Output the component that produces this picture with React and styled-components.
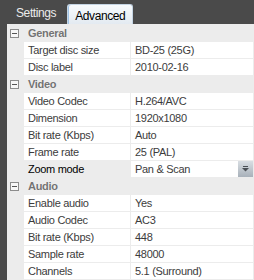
import React from "react";
import styled, { createGlobalStyle } from "styled-components";

const GlobalStyle = createGlobalStyle`
  body {
    margin: 0;
    background: #4a4a4a;
  }
`;

const Frame = styled.div`
  width: 254px;
  height: 280px;
  overflow: hidden;
  background: #4a4a4a;
  font-family: "Liberation Sans", Arial, sans-serif;
`;

const TabBar = styled.div`
  display: flex;
  align-items: flex-end;
  height: 24px;
  padding-left: 8px;
`;

const Tab = styled.div`
  box-sizing: border-box;
  height: ${(p) => (p.$active ? "20px" : "22px")};
  padding: ${(p) => (p.$active ? "4px 7px 0 7px" : "3px 7px 0 7px")};
  margin-left: ${(p) => (p.$active ? "3px" : "0")};
  font-size: 12px;
  letter-spacing: -0.4px;
  color: ${(p) => (p.$active ? "#000" : "#ececec")};
  background: ${(p) =>
    p.$active ? "linear-gradient(#f8fbfd, #e3eaf1)" : "transparent"};
  border: ${(p) => (p.$active ? "1px solid #c4d4e3" : "1px solid transparent")};
  border-bottom: none;
  border-radius: 3px 3px 0 0;
  box-shadow: ${(p) => (p.$active ? "inset 1px 0 0 #9fc3e6" : "none")};
`;

const Panel = styled.div`
  margin-left: 7px;
  width: 247px;
  height: 256px;
  box-sizing: border-box;
  padding: 1px 2px 0 0;
  background: #ececec;
  display: flex;
  flex-direction: column;
  gap: 1px;
`;

const Row = styled.div`
  display: grid;
  grid-template-columns: 16px 106px 122px;
  column-gap: 1px;
  height: 16px;
  font-size: 11px;
  letter-spacing: -0.3px;
  line-height: 16px;
`;

const Gutter = styled.div`
  display: flex;
  align-items: center;
  padding-left: 3px;
`;

const Category = styled.div`
  grid-column: 2 / 4;
  padding-left: 4px;
  font-weight: bold;
  color: #737373;
  text-shadow: 0 0 1px #fff;
`;

const Cell = styled.div`
  position: relative;
  padding-left: 4px;
  white-space: nowrap;
  overflow: hidden;
  color: ${(p) => (p.$selected ? "#000" : "#3c3c3c")};
  background: ${(p) => (p.$selected ? "transparent" : "#fff")};
`;

const DropButton = styled.div`
  position: absolute;
  right: 0;
  top: 0;
  width: 15px;
  height: 16px;
  background: linear-gradient(#d9dee3, #a8b1ba);
  display: flex;
  align-items: center;
  justify-content: center;
`;

const Collapse = () => (
  <svg width="9" height="9" viewBox="0 0 9 9">
    <rect x="0.5" y="0.5" width="8" height="8" fill="#f7f7f7" stroke="#8c8c8c" />
    <line x1="2" y1="4.5" x2="7" y2="4.5" stroke="#555" />
  </svg>
);

const Arrow = () => (
  <svg width="7" height="6" viewBox="0 0 7 6">
    <rect x="1" y="0" width="5" height="1" fill="#4a4f55" />
    <path d="M0 2 H7 L3.5 5.5 Z" fill="#4a4f55" />
  </svg>
);

const groups = [
  {
    title: "General",
    items: [
      ["Target disc size", "BD-25 (25G)"],
      ["Disc label", "2010-02-16"],
    ],
  },
  {
    title: "Video",
    items: [
      ["Video Codec", "H.264/AVC"],
      ["Dimension", "1920x1080"],
      ["Bit rate (Kbps)", "Auto"],
      ["Frame rate", "25 (PAL)"],
      ["Zoom mode", "Pan & Scan", true],
    ],
  },
  {
    title: "Audio",
    items: [
      ["Enable audio", "Yes"],
      ["Audio Codec", "AC3"],
      ["Bit rate (Kbps)", "448"],
      ["Sample rate", "48000"],
      ["Channels", "5.1 (Surround)"],
    ],
  },
];

export default function App() {
  return (
    <Frame>
      <GlobalStyle />
      <TabBar>
        <Tab>Settings</Tab>
        <Tab $active>Advanced</Tab>
      </TabBar>
      <Panel>
        {groups.map((g) => (
          <React.Fragment key={g.title}>
            <Row>
              <Gutter>
                <Collapse />
              </Gutter>
              <Category>{g.title}</Category>
            </Row>
            {g.items.map(([name, value, selected]) => (
              <Row key={name + value}>
                <div />
                <Cell $selected={selected}>{name}</Cell>
                <Cell>
                  {value}
                  {selected && (
                    <DropButton>
                      <Arrow />
                    </DropButton>
                  )}
                </Cell>
              </Row>
            ))}
          </React.Fragment>
        ))}
      </Panel>
    </Frame>
  );
}
